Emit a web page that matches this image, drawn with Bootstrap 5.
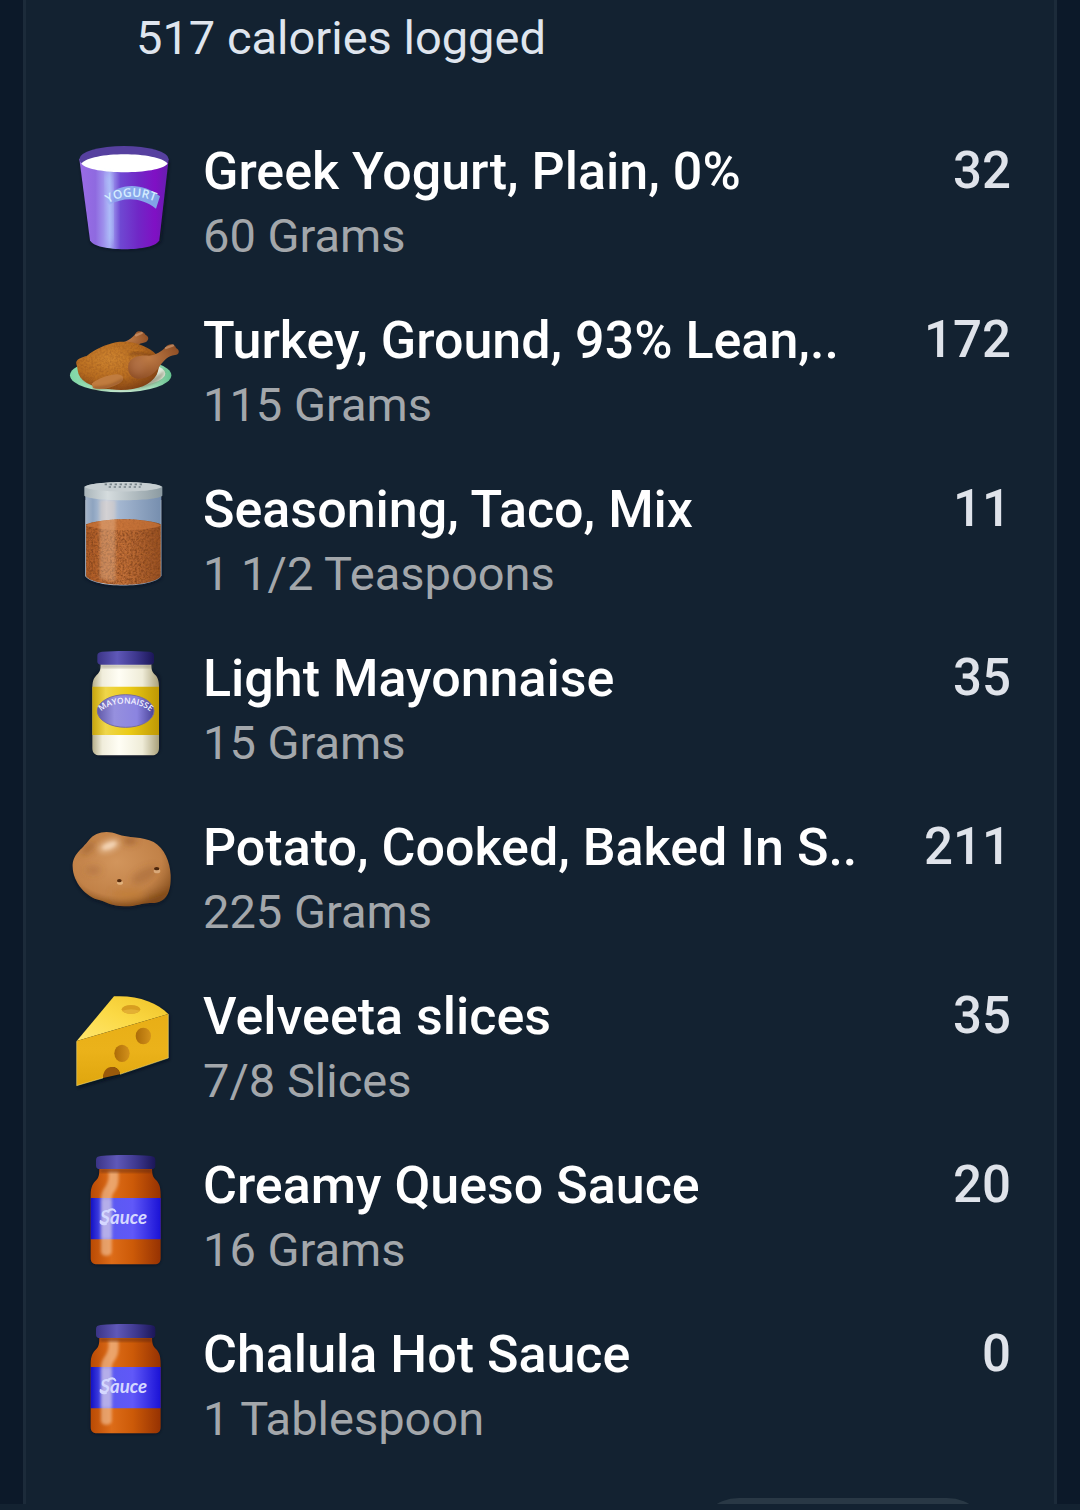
<!DOCTYPE html>
<html lang="en">
<head>
<meta charset="utf-8">
<meta name="viewport" content="width=device-width, initial-scale=1">
<title>Meal log</title>
<link href="https://cdn.jsdelivr.net/npm/bootstrap@5.3.0/dist/css/bootstrap.min.css" rel="stylesheet">
<style>
  body { background: #132231; font-family: Roboto, "Liberation Sans", sans-serif; }
  .page-frame { background: #0c1929; padding: 0 23px; }
  .meal-panel { background: #132231; border: solid #1c2b3a; border-width: 0 3px; padding: 0 43px 0 34px; }
  .meal-total { color: #dfe5ee; font-size: 47px; line-height: 56px; padding: 10px 0 64px 76px; font-weight: 400; margin: 0; }
  .food-row { height: 169px; }
  .food-art { width: 130px; height: 130px; flex: none; }
  .food-text { padding: 9px 0 0 13px; min-width: 0; }
  .food-name { color: #fff; font-size: 52px; line-height: 66px; font-weight: 500; }
  .food-amount { color: #a3a7ab; font-size: 47px; line-height: 62px; }
  .food-cal { color: #dfe3ea; font-size: 51px; line-height: 66px; font-weight: 500; padding-top: 8px; }
  .panel-foot { height: 22px; padding: 16px 20px 0 0; overflow: hidden; }
  .pill-btn { background: #293845; border: 0; width: 296px; height: 88px; flex: none; }
</style>
</head>
<body>
<svg width="0" height="0" class="position-absolute" aria-hidden="true">
  <defs>
    <filter id="soft" x="-30%" y="-30%" width="160%" height="160%"><feGaussianBlur stdDeviation="5"/></filter>
    <filter id="softer" x="-50%" y="-50%" width="200%" height="200%"><feGaussianBlur stdDeviation="10"/></filter>
    <filter id="grain" x="0" y="0" width="100%" height="100%">
      <feTurbulence type="fractalNoise" baseFrequency=".16" numOctaves="3" seed="4"/>
      <feColorMatrix values="0 0 0 0 .2  0 0 0 0 .05  0 0 0 0 .01  1.8 0 0 0 -.65"/>
      <feComposite in2="SourceGraphic" operator="in"/>
    </filter>
    <linearGradient id="lidG"><stop offset="0" stop-color="#3b3486"/><stop offset=".35" stop-color="#5f58b8"/><stop offset=".7" stop-color="#3c368c"/><stop offset="1" stop-color="#1b1657"/></linearGradient>
    <linearGradient id="jarG"><stop offset="0" stop-color="#b94a04"/><stop offset=".3" stop-color="#dd6c18"/><stop offset=".6" stop-color="#cc5a08"/><stop offset="1" stop-color="#963202"/></linearGradient>
    <linearGradient id="labG"><stop offset="0" stop-color="#1110c4"/><stop offset=".2" stop-color="#5a5af0"/><stop offset=".6" stop-color="#6058f8"/><stop offset="1" stop-color="#1a12d6"/></linearGradient>
    <g id="sauceJar">
      <path d="M94 150c0-28 6-37 16-47 7-7 9-14 9-35h156c0 22 4 29 12 37 10 10 15 22 15 45v187c0 13-7 20-20 20H114c-14 0-22-7-22-20z" fill="#07111c" filter="url(#soft)" opacity=".6"/>
      <path d="M92 147c0-25 7-35 17-45 7-7 9-14 9-36h158c0 22 4 28 12 36 10 10 14 22 14 45v189c0 13-6 19-19 19H112c-13 0-20-6-20-19z" fill="url(#jarG)"/>
      <path d="M92 156h210v124H92z" fill="url(#labG)"/>
      <path d="M145 76h30c2 28 1 46-12 61-9 10-8 21-8 35v145c0 16-32 16-32 0V164c0-24 6-33 15-45 8-13 9-26 7-43z" fill="#ffe9d0" opacity=".45" filter="url(#soft)"/>
      <path d="M124 160h31v117h-31z" fill="#d9dcff" opacity=".3" filter="url(#soft)"/>
      <path d="M120 70h156v9H120z" fill="#3f1a16" opacity=".5" filter="url(#soft)"/>
      <path d="M108 42c0-8 5-11 14-12 45-4 104-4 150 0 9 1 14 4 14 12v17c0 7-4 10-12 10H120c-8 0-12-3-12-10z" fill="url(#lidG)"/>
      <text x="121" y="233" font-family="Lato, sans-serif" font-size="56" font-style="italic" font-weight="700" fill="#d5d8ff">Sauce</text>
      <path d="M122 225q-3 12 16 9M146 193q15-7 20 3" fill="none" stroke="#d5d8ff" stroke-width="6" stroke-linecap="round"/>
    </g>
  </defs>
</svg>

<div class="page-frame">
<main class="meal-panel">
  <h1 class="meal-total">517 calories logged</h1>
  <ul class="list-unstyled m-0">

    <li class="food-row d-flex">
      <svg class="food-art" viewBox="0 -3 390 390" role="img" aria-label="Yogurt cup">
        <defs>
          <linearGradient id="yg"><stop offset="0" stop-color="#9a6be6"/><stop offset=".18" stop-color="#8f6ae0"/><stop offset=".34" stop-color="#a9aef5"/><stop offset=".46" stop-color="#6f48d2"/><stop offset=".66" stop-color="#7027c6"/><stop offset=".85" stop-color="#8010c4"/><stop offset="1" stop-color="#641fae"/></linearGradient>
          <linearGradient id="yt"><stop offset="0" stop-color="#86a0ef" stop-opacity="0"/><stop offset=".25" stop-color="#8fa9ee"/><stop offset="1" stop-color="#7fa2e6"/></linearGradient>
          <path id="yArc" d="M144 217C180 193 235 190 286 212"/>
        </defs>
        <path d="M60 90 92 335c30 30 180 30 212-3L328 90z" fill="#07111c" opacity=".6" filter="url(#soft)"/>
        <path d="M58 84 90 328c14 36 194 36 208 0L326 84z" fill="url(#yg)"/>
        <ellipse cx="192" cy="84" rx="134" ry="39" fill="#56409f"/>
        <path d="M64 98c28-38 230-38 259 0-30 34-229 34-259 0z" fill="#fff"/>
        <path d="M140 132q16 30 14 200" fill="none" stroke="#b6dcff" stroke-width="14" opacity=".6" filter="url(#softer)"/>
        <path d="M134 202C175 155 245 152 300 196l-12 37c-48-36-96-34-140-12z" fill="url(#yt)"/>
        <text font-family="Open Sans, sans-serif" font-size="36" font-weight="600" fill="#d5edff"><textPath href="#yArc">YOGURT</textPath></text>
      </svg>
      <div class="food-text flex-grow-1"><div class="food-name text-nowrap">Greek Yogurt, Plain, 0%</div><div class="food-amount">60 Grams</div></div>
      <div class="food-cal">32</div>
    </li>

    <li class="food-row d-flex">
      <svg class="food-art" viewBox="0 -33 390 390" role="img" aria-label="Roast turkey">
        <defs>
          <radialGradient id="tb" cx=".4" cy=".35" r=".7"><stop offset="0" stop-color="#cf8530"/><stop offset=".6" stop-color="#b86d20"/><stop offset="1" stop-color="#7f4013"/></radialGradient>
          <radialGradient id="tl" cx=".4" cy=".4" r=".7"><stop offset="0" stop-color="#bd7a45"/><stop offset="1" stop-color="#8a4a22"/></radialGradient>
          <linearGradient id="tp"><stop offset="0" stop-color="#7dd6a4"/><stop offset=".5" stop-color="#c9edd5"/><stop offset=".8" stop-color="#a7dfbd"/><stop offset="1" stop-color="#65c28e"/></linearGradient>
        </defs>
        <ellipse cx="182" cy="196" rx="152" ry="51" fill="url(#tp)"/>
        <ellipse cx="188" cy="191" rx="128" ry="40" fill="#e0eadb"/>
        <path d="M60 205q60 45 180 30 70-15 75-55-30 30-90 34z" fill="#4c4525" opacity=".4" filter="url(#soft)"/>
        <path d="M170 100c28-3 47-14 58-32 8-8 24-4 29 7 12 5 9 18-1 22-22 5-30 11-38 24z" fill="url(#tl)"/>
        <path d="M49 162c-3-14 15-20 31-24 25-20 56-34 88-41 45-6 84 8 112 28 20 15 21 45 10 69-20 36-75 52-138 44-45-2-85-18-96-45-4-12-3-20-7-31z" fill="url(#tb)"/>
        <path d="M49 162c-3-14 15-20 31-24 25-20 56-34 88-41 45-6 84 8 112 28 20 15 21 45 10 69-20 36-75 52-138 44-45-2-85-18-96-45z" fill="#000" filter="url(#grain)" opacity=".35"/>
        <path d="M208 134q34-12 78 12" fill="none" stroke="#5d2c0d" stroke-width="8" opacity=".5" filter="url(#soft)"/>
        <path d="M205 165c5-27 38-30 62-28 22-2 37-12 50-26 10-12 27-10 31 3 14 7 9 21-3 21-22 3-31 15-45 32-18 28-43 41-68 39-18-2-31-18-27-41z" fill="url(#tl)"/>
        <ellipse cx="232" cy="170" rx="21" ry="25" fill="#c28462" opacity=".3" filter="url(#softer)"/>
        <path d="M95 221c18-15 45-25 73-28 25-1 29 18 9 28-26 14-58 20-78 13z" fill="#c07c3f"/>
        <path d="M100 233q46 5 90-24" fill="none" stroke="#6a3310" stroke-width="6" opacity=".6" filter="url(#soft)"/>
        <path d="m318 114 21-8M228 76l17-7" stroke="#d6a279" stroke-width="7" stroke-linecap="round" opacity=".6"/>
      </svg>
      <div class="food-text flex-grow-1"><div class="food-name text-nowrap">Turkey, Ground, 93% Lean,..</div><div class="food-amount">115 Grams</div></div>
      <div class="food-cal">172</div>
    </li>

    <li class="food-row d-flex">
      <svg class="food-art" viewBox="0 -6 390 390" role="img" aria-label="Seasoning shaker">
        <defs>
          <linearGradient id="sg"><stop offset="0" stop-color="#a4b4c8"/><stop offset=".1" stop-color="#8ea4c0"/><stop offset=".28" stop-color="#c3d1e3"/><stop offset=".45" stop-color="#a3b6d0"/><stop offset="1" stop-color="#768eae"/></linearGradient>
          <linearGradient id="ss"><stop offset="0" stop-color="#ad5b26"/><stop offset=".5" stop-color="#c27038"/><stop offset="1" stop-color="#985021"/></linearGradient>
          <linearGradient id="sl"><stop offset="0" stop-color="#a9b5ba"/><stop offset=".3" stop-color="#d5dcde"/><stop offset="1" stop-color="#8b9aa1"/></linearGradient>
        </defs>
        <path d="M76 80h230v245c-40 35-190 35-230 0z" fill="#07111c" opacity=".6" filter="url(#soft)"/>
        <path d="M76 70h228v248c-22 38-206 38-228 0z" fill="url(#sg)"/>
        <path d="M78 163c60-20 170-20 225 0v155c-22 35-203 35-225 0z" fill="url(#ss)"/>
        <path d="M78 163c60-20 170-20 225 0v155c-22 35-203 35-225 0z" fill="#000" filter="url(#grain)"/>
        <path d="M78 166c40-23 185-24 225 0-35 20-185 20-225 0z" fill="#c8743a" opacity=".75"/>
        <path d="M119 90h48v244q-30-1-48-8z" fill="#f8d5b6" opacity=".32" filter="url(#soft)"/>
        <path d="M77 90v230M303 90v228" stroke="#c0c9cf" stroke-width="2" opacity=".7"/>
        <path d="M73 50c20-18 213-18 234 0v27c-18 18-216 18-234 0z" fill="url(#sl)"/>
        <path d="M74 51c22-20 210-20 232 0-26 18-210 18-232 0z" fill="#c6ced1"/>
        <path d="M134 43h116M146 51h96" stroke="#77848a" stroke-width="5" stroke-dasharray="7 8"/>
      </svg>
      <div class="food-text flex-grow-1"><div class="food-name text-nowrap">Seasoning, Taco, Mix</div><div class="food-amount">1 1/2 Teaspoons</div></div>
      <div class="food-cal">11</div>
    </li>

    <li class="food-row d-flex">
      <svg class="food-art" viewBox="0 -11 390 390" role="img" aria-label="Mayonnaise jar">
        <defs>
          <linearGradient id="mj"><stop offset="0" stop-color="#b5ae8a"/><stop offset=".15" stop-color="#f0eddb"/><stop offset=".4" stop-color="#fffef5"/><stop offset=".75" stop-color="#efecd8"/><stop offset="1" stop-color="#aaa17a"/></linearGradient>
          <linearGradient id="my"><stop offset="0" stop-color="#c7a50c"/><stop offset=".2" stop-color="#efd64a"/><stop offset=".55" stop-color="#ebcb16"/><stop offset="1" stop-color="#bf9804"/></linearGradient>
          <linearGradient id="mo"><stop offset="0" stop-color="#6059a8"/><stop offset=".3" stop-color="#9690de"/><stop offset=".7" stop-color="#8b84e0"/><stop offset="1" stop-color="#494297"/></linearGradient>
          <path id="mArc" d="M124 213C150 180 242 180 273 215"/>
        </defs>
        <rect x="98" y="90" width="202" height="259" rx="30" fill="#07111c" opacity=".6" filter="url(#soft)"/>
        <path d="M97 140c0-24 8-33 17-41 6-6 8-12 8-31h152c0 19 2 25 8 31 11 9 15 19 15 41v182c0 15-8 22-22 22H119c-14 0-22-7-22-22z" fill="url(#mj)"/>
        <path d="M97 138h200v145H97z" fill="url(#my)"/>
        <path d="M122 72h152v9H122z" fill="#77715c" opacity=".5" filter="url(#soft)"/>
        <path d="M112 45c0-8 5-11 14-12 42-3 98-3 142 0 9 1 14 4 14 12v17c0 7-4 10-12 10H124c-8 0-12-3-12-10z" fill="url(#lidG)"/>
        <ellipse cx="197" cy="211" rx="85" ry="49" fill="url(#mo)" stroke="#766ba0" stroke-width="3"/>
        <text font-family="Open Sans, sans-serif" font-size="25" font-weight="600" fill="#f4f3ff"><textPath href="#mArc">MAYONAISSE</textPath></text>
      </svg>
      <div class="food-text flex-grow-1"><div class="food-name text-nowrap">Light Mayonnaise</div><div class="food-amount">15 Grams</div></div>
      <div class="food-cal">35</div>
    </li>

    <li class="food-row d-flex">
      <svg class="food-art" viewBox="0 -27 390 390" role="img" aria-label="Potato">
        <defs>
          <radialGradient id="po" cx=".45" cy=".4" r=".65"><stop offset="0" stop-color="#d2955c"/><stop offset=".7" stop-color="#c28248"/><stop offset="1" stop-color="#8a5220"/></radialGradient>
          <clipPath id="poc"><path id="pos" d="M87 75c18-22 51-31 86-17 30 12 75 6 108 23 33 19 49 60 51 99 2 53-13 84-57 84-25-2-48 11-82 10-40-1-52-12-73-18-42-8-81-55-82-99-2-39 27-52 49-82z"/></clipPath>
        </defs>
        <use href="#pos" y="6" fill="#07111c" opacity=".5" filter="url(#soft)"/>
        <use href="#pos" fill="url(#po)"/>
        <g clip-path="url(#poc)">
          <g filter="url(#softer)">
            <path d="M60 236q75 40 150 26 60-8 110-30v60H60z" fill="#7a430f" opacity=".55"/>
            <ellipse cx="205" cy="238" rx="50" ry="18" fill="#c17d38" opacity=".7"/>
            <ellipse cx="84" cy="100" rx="25" ry="12" fill="#8a5021" opacity=".45" transform="rotate(-45 84 100)"/>
            <ellipse cx="210" cy="77" rx="20" ry="10" fill="#8d5023" opacity=".6"/>
            <ellipse cx="253" cy="180" rx="43" ry="18" fill="#985c33" opacity=".4" transform="rotate(-30 253 180)"/>
            <ellipse cx="100" cy="165" rx="24" ry="12" fill="#985c33" opacity=".35"/>
          </g>
        </g>
        <ellipse cx="147" cy="92" rx="34" ry="15" fill="#ffe8d0" opacity=".6" transform="rotate(-22 147 92)" filter="url(#softer)"/>
        <ellipse cx="148" cy="92" rx="22" ry="9" fill="#ffe8d0" opacity=".5" transform="rotate(-22 147 92)" filter="url(#soft)"/>
        <ellipse cx="180" cy="203" rx="9" ry="6" fill="#e1b27d"/><ellipse cx="178" cy="197" rx="7" ry="5" fill="#54290b"/>
        <ellipse cx="291" cy="168" rx="10" ry="7" fill="#d9a878"/><ellipse cx="290" cy="161" rx="8" ry="5" fill="#4c260c"/>
      </svg>
      <div class="food-text flex-grow-1"><div class="food-name text-nowrap">Potato, Cooked, Baked In S..</div><div class="food-amount">225 Grams</div></div>
      <div class="food-cal">211</div>
    </li>

    <li class="food-row d-flex">
      <svg class="food-art" viewBox="0 -15 390 390" role="img" aria-label="Cheese wedge">
        <defs>
          <linearGradient id="ct" x1="0" x2="1" y1="1" y2="0"><stop offset="0" stop-color="#ffe66e"/><stop offset=".5" stop-color="#fbd945"/><stop offset="1" stop-color="#efc227"/></linearGradient>
          <linearGradient id="cs" x2="0" y2="1"><stop offset="0" stop-color="#e8ae16"/><stop offset=".5" stop-color="#ebb21a"/><stop offset="1" stop-color="#dfa60e"/></linearGradient>
          <linearGradient id="ch"><stop offset="0" stop-color="#ac6c08"/><stop offset="1" stop-color="#d3911b"/></linearGradient>
        </defs>
        <path d="M54 184 166 52q100 0 162 54v133L182 288 54 323z" fill="#050d16" opacity=".75" filter="url(#soft)"/>
        <path d="M50 183 162 49c70-4 129 18 163 53z" fill="url(#ct)"/>
        <path d="M50 183 325 102v132l-145 49c-4-30-44-29-51 11l-79 23z" fill="url(#cs)"/>
        <path d="M129 294c7-40 47-41 51-11-12-16-37-9-51 11z" fill="#a46106"/>
        <path d="M129 294c0-21 12-34 27-33 15 1 21 10 24 22z" fill="#99590b"/>
        <ellipse cx="213" cy="88" rx="28" ry="13" fill="#d89e20"/><path d="M186 92q27-9 54 0c-10 12-45 12-54 0z" fill="#e3b034"/>
        <ellipse cx="186" cy="220" rx="23" ry="26" fill="url(#ch)"/><ellipse cx="250" cy="168" rx="23" ry="25" fill="url(#ch)"/>
        <path d="M50 184v133l79-23M180 283l145-49V102" fill="none" stroke="#fff09a" stroke-width="2" opacity=".7"/>
      </svg>
      <div class="food-text flex-grow-1"><div class="food-name text-nowrap">Velveeta slices</div><div class="food-amount">7/8 Slices</div></div>
      <div class="food-cal">35</div>
    </li>

    <li class="food-row d-flex">
      <svg class="food-art" viewBox="0 -6 390 390" role="img" aria-label="Sauce jar"><use href="#sauceJar"/></svg>
      <div class="food-text flex-grow-1"><div class="food-name text-nowrap">Creamy Queso Sauce</div><div class="food-amount">16 Grams</div></div>
      <div class="food-cal">20</div>
    </li>

    <li class="food-row d-flex">
      <svg class="food-art" viewBox="0 -6 390 390" role="img" aria-label="Sauce jar"><use href="#sauceJar"/></svg>
      <div class="food-text flex-grow-1"><div class="food-name text-nowrap">Chalula Hot Sauce</div><div class="food-amount">1 Tablespoon</div></div>
      <div class="food-cal">0</div>
    </li>
  </ul>
  <div class="panel-foot d-flex justify-content-end">
    <button type="button" class="pill-btn rounded-pill" aria-label="Add food"></button>
  </div>
</main>
</div>
<script src="https://cdn.jsdelivr.net/npm/bootstrap@5.3.0/dist/js/bootstrap.bundle.min.js"></script>
</body>
</html>
